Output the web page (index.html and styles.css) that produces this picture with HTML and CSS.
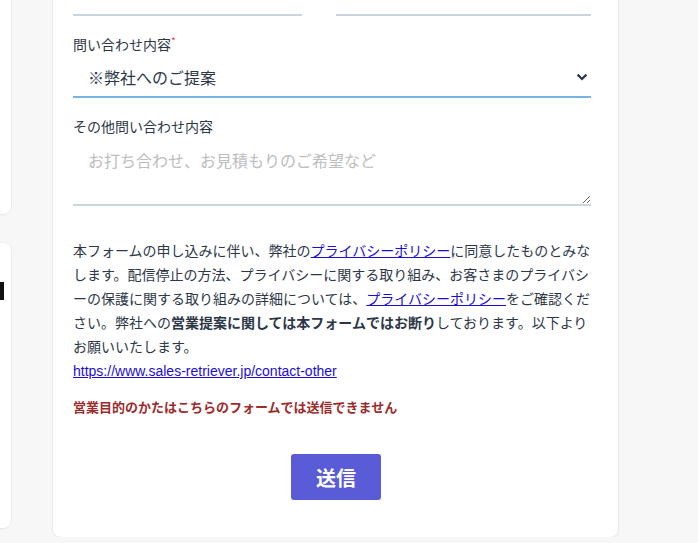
FILE: index.html
```html
<!DOCTYPE html>
<html lang="ja">
<head>
    <meta charset="UTF-8">
    <meta name="viewport" content="width=device-width, initial-scale=1.0">
    <title>お問い合わせ</title>
    <link rel="stylesheet" href="styles.css">
</head>
<body>

    <div class="page">

        <div class="side">
            <div class="side-card first"></div>
            <div class="side-card second"><span class="mark"></span></div>
        </div>

        <div class="card">
            <form action="">
                <div class="row">
                    <input type="text" class="txt">
                    <input type="text" class="txt">
                </div>

                <div class="field">
                    <label>問い合わせ内容<span class="req">*</span></label>
                    <div class="select">
                        <select>
                            <option selected>※弊社へのご提案</option>
                            <option>サービスについて</option>
                            <option>その他</option>
                        </select>
                        <svg width="12" height="8" viewBox="0 0 12 8"><path d="M1.6 1.6 L6 6 L10.4 1.6" fill="none" stroke="#2d3748" stroke-width="2.2"/></svg>
                    </div>
                </div>

                <div class="field">
                    <label>その他問い合わせ内容</label>
                    <textarea placeholder="お打ち合わせ、お見積もりのご希望など"></textarea>
                </div>

                <p class="notice">
                    本フォームの申し込みに伴い、弊社の<a href="#">プライバシーポリシー</a>に同意したものとみなします。配信停止の方法、プライバシーに関する取り組み、お客さまのプライバシーの保護に関する取り組みの詳細については、<a href="#">プライバシーポリシー</a>をご確認ください。弊社への<b>営業提案に関しては本フォームではお断り</b>しております。以下よりお願いいたします。<br>
                    <a href="#" class="url">https://www.sales-retriever.jp/contact-other</a>
                </p>

                <p class="warn">営業目的のかたはこちらのフォームでは送信できません</p>

                <div class="btn">
                    <button type="button">送信</button>
                </div>
            </form>
        </div>
    </div>

</body>
</html>
```

FILE: styles.css
```css
*{
    margin: 0;
    padding: 0;
    box-sizing: border-box;
}
body{
    background: #f7f7f7;
    font-family: "Noto Sans CJK JP", sans-serif;
    color: #2d3748;
    overflow: hidden;
}
.page{
    display: flex;
    gap: 42px;
    margin-top: -48px;
    margin-left: -189px;
}
.side{
    width: 200px;
    flex-shrink: 0;
}
.side-card{
    background: #fff;
    border-radius: 8px;
    box-shadow: 0 0 0 1px rgba(0,0,0,0.03), 0 1px 3px rgba(0,0,0,0.04);
}
.first{
    height: 262px;
}
.second{
    height: 285px;
    margin-top: 29px;
    display: flex;
    justify-content: flex-end;
    align-items: flex-start;
    padding: 39px 7px 0 0;
}
.mark{
    width: 20px;
    height: 18px;
    background: #111;
}
.card{
    width: 565px;
    flex-shrink: 0;
    background: #fff;
    border-radius: 8px;
    box-shadow: 0 0 0 1px rgba(0,0,0,0.03), 0 1px 4px rgba(0,0,0,0.05);
    padding: 24px 27px 37px 20px;
}
.row{
    display: grid;
    grid-template-columns: 229px 1fr;
    gap: 34px;
}
.field{
    margin-top: 18px;
}
label{
    display: block;
    font-size: 14px;
    line-height: 20px;
    margin-bottom: 4px;
}
.req{
    color: #e53e3e;
    font-size: 10px;
    vertical-align: top;
    line-height: 14px;
}
.txt{
    display: block;
    width: 100%;
    height: 40px;
    border: none;
    border-bottom: 2px solid #cbd5e0;
    outline: none;
}
.select{
    display: flex;
    align-items: center;
    height: 40px;
    border-bottom: 2px solid #74b3e3;
    padding-right: 3px;
}
select{
    flex: 1;
    height: 100%;
    appearance: none;
    -webkit-appearance: none;
    border: none;
    background: transparent;
    outline: none;
    font-family: inherit;
    font-size: 16px;
    color: #2d3748;
    padding-left: 15px;
}
textarea{
    display: block;
    width: 100%;
    height: 66px;
    border: none;
    border-bottom: 2px solid #cbd5e0;
    outline: none;
    resize: vertical;
    padding: 8px 15px;
    font-family: inherit;
    font-size: 16px;
    line-height: 24px;
    color: #2d3748;
}
textarea::placeholder{
    color: #bdbdbd;
}
.notice{
    margin-top: 32px;
    font-size: 14px;
    line-height: 24px;
}
.notice a{
    color: #1a0dd8;
}
.notice b{
    font-weight: bold;
}
.url{
    font-family: "Liberation Sans", Arial, sans-serif;
}
.warn{
    margin-top: 14px;
    font-size: 13px;
    line-height: 20px;
    font-weight: bold;
    color: #9b2c2c;
}
.btn{
    margin-top: 37px;
    margin-right: -8px;
    display: flex;
    justify-content: center;
}
.btn button{
    width: 90px;
    height: 46px;
    border: none;
    border-radius: 3px;
    background: #5a5bd6;
    color: #fff;
    font-family: inherit;
    font-size: 20px;
    font-weight: bold;
}
```
